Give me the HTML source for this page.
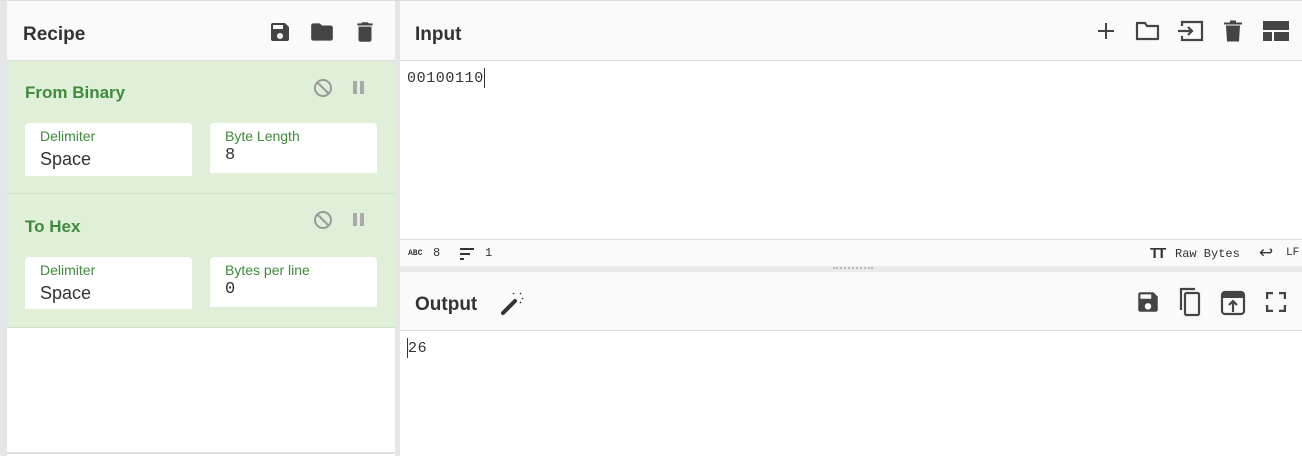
<!DOCTYPE html>
<html><head><meta charset="utf-8"><style>
*{margin:0;padding:0;box-sizing:border-box}
body{width:1302px;height:456px;overflow:hidden;background:#fff;font-family:"Liberation Sans",sans-serif;position:relative}
.a{position:absolute}
.hdr{background:#fafafa;border-bottom:1px solid #ddd}
.title{font-weight:bold;font-size:19px;color:#333}
.op{background:#dfefd8;border-bottom:1px solid #cfe3c6}
.opt{font-weight:bold;font-size:17px;color:#3e8b3c}
.box{background:#fff;border-radius:4px 4px 0 0}
.lab{font-size:14px;color:#3e8b3c}
.val{font-size:18px;color:#333}
.mono{font-family:"Liberation Mono",monospace}
svg{position:absolute}
</style></head><body>
<div class="a" style="left:0;top:0;width:7px;height:456px;background:#e6e6e6"></div>
<div class="a" style="left:395px;top:0;width:5px;height:456px;background:#e6e6e6"></div>
<div class="a" style="left:0;top:0;width:1302px;height:1px;background:#ddd"></div>
<div class="a" style="left:7px;top:452px;width:388px;height:2px;background:#ddd"></div>

<div class="a hdr" style="left:7px;top:1px;width:388px;height:60px"></div>
<div class="a title" style="left:23px;top:24px">Recipe</div>
<svg style="left:268px;top:20px" width="24" height="24" viewBox="0 0 24 24"><path fill="#444" d="M17 3H5a2 2 0 0 0-2 2v14a2 2 0 0 0 2 2h14a2 2 0 0 0 2-2V7zm-5 16a3 3 0 1 1 0-6 3 3 0 0 1 0 6zm3-10H5V5h10z"/></svg>
<svg style="left:309px;top:19px" width="26" height="26" viewBox="0 0 24 24"><path fill="#444" d="M10 4H4a2 2 0 0 0-2 2v12a2 2 0 0 0 2 2h16a2 2 0 0 0 2-2V8a2 2 0 0 0-2-2h-8z"/></svg>
<svg style="left:352px;top:19px" width="26" height="26" viewBox="0 0 24 24"><path fill="#444" d="M6 19a2 2 0 0 0 2 2h8a2 2 0 0 0 2-2V7H6zM19 4h-3.5l-1-1h-5l-1 1H5v2h14z"/></svg>

<div class="a op" style="left:7px;top:61px;width:388px;height:133px"></div>
<div class="a opt" style="left:25px;top:83px">From Binary</div>
<svg style="left:313px;top:78px" width="20" height="20" viewBox="0 0 20 20"><circle cx="10" cy="10" r="8" fill="none" stroke="#9a9a9a" stroke-width="2"/><path d="M4.5 4.5l11 11" stroke="#9a9a9a" stroke-width="2"/></svg>
<div class="a" style="left:353px;top:81px;width:4px;height:13px;background:#aaa"></div>
<div class="a" style="left:360px;top:81px;width:4px;height:13px;background:#aaa"></div>
<div class="a box" style="left:25px;top:123px;width:167px;height:53px"></div>
<div class="a lab" style="left:40px;top:128px">Delimiter</div>
<div class="a val" style="left:40px;top:149px">Space</div>
<div class="a box" style="left:210px;top:123px;width:167px;height:50px"></div>
<div class="a lab" style="left:225px;top:128px">Byte Length</div>
<div class="a val mono" style="left:225px;top:146px;font-size:17px">8</div>

<div class="a op" style="left:7px;top:194px;width:388px;height:134px"></div>
<div class="a opt" style="left:25px;top:217px">To Hex</div>
<svg style="left:313px;top:210px" width="20" height="20" viewBox="0 0 20 20"><circle cx="10" cy="10" r="8" fill="none" stroke="#9a9a9a" stroke-width="2"/><path d="M4.5 4.5l11 11" stroke="#9a9a9a" stroke-width="2"/></svg>
<div class="a" style="left:353px;top:213px;width:4px;height:13px;background:#aaa"></div>
<div class="a" style="left:360px;top:213px;width:4px;height:13px;background:#aaa"></div>
<div class="a box" style="left:25px;top:257px;width:167px;height:52px"></div>
<div class="a lab" style="left:40px;top:262px">Delimiter</div>
<div class="a val" style="left:40px;top:283px">Space</div>
<div class="a box" style="left:210px;top:257px;width:167px;height:50px"></div>
<div class="a lab" style="left:225px;top:262px">Bytes per line</div>
<div class="a val mono" style="left:225px;top:280px;font-size:17px">0</div>

<div class="a hdr" style="left:400px;top:1px;width:902px;height:60px"></div>
<div class="a title" style="left:415px;top:24px">Input</div>
<svg style="left:1095px;top:20px" width="22" height="22" viewBox="0 0 22 22"><path d="M11 3v16M3 11h16" stroke="#444" stroke-width="2"/></svg>
<svg style="left:1134px;top:19px" width="28" height="24" viewBox="0 0 28 24"><path d="M3 4h8l2 3h11v13H3z" fill="none" stroke="#444" stroke-width="2.2" stroke-linejoin="round"/></svg>
<svg style="left:1176px;top:19px" width="30" height="24" viewBox="0 0 30 24"><path d="M6 7V3h20v18H6v-4" fill="none" stroke="#444" stroke-width="2.2"/><path d="M2 12h14M12 8l4 4-4 4" fill="none" stroke="#444" stroke-width="2.2"/></svg>
<svg style="left:1221px;top:19px" width="24" height="25" viewBox="0 0 24 24"><path fill="#444" d="M5 6h14l-1 16H6zM3 3h18v2H3zM9 1h6v2H9z"/></svg>
<svg style="left:1263px;top:21px" width="26" height="20" viewBox="0 0 26 20"><path fill="#444" d="M0 0h26v9H0zM0 11h9v9H0zM11 11h15v9H11z"/></svg>
<div class="a mono" style="left:407px;top:70px;font-size:15px;letter-spacing:0.6px;color:#333">00100110</div>
<div class="a" style="left:484px;top:68px;width:1px;height:20px;background:#333"></div>

<div class="a" style="left:400px;top:239px;width:902px;height:1px;background:#ddd"></div>
<div class="a" style="left:400px;top:240px;width:902px;height:26px;background:#fafafa"></div>
<div class="a mono" style="left:408px;top:249px;font-size:8px;font-weight:bold;color:#333">ABC</div>
<div class="a mono" style="left:433px;top:246px;font-size:12px;color:#333">8</div>
<svg style="left:460px;top:248px" width="16" height="12" viewBox="0 0 16 12"><path d="M0 1h14M0 6h10M0 11h4" stroke="#333" stroke-width="2"/></svg>
<div class="a mono" style="left:485px;top:246px;font-size:12px;color:#333">1</div>
<div class="a" style="left:1150px;top:245px;font-weight:bold;font-size:15px;color:#333;letter-spacing:-2px">TT</div>
<div class="a mono" style="left:1175px;top:247px;font-size:12px;color:#333">Raw Bytes</div>
<div class="a" style="left:1259px;top:243px;font-size:17px;color:#333">↩</div>
<div class="a mono" style="left:1286px;top:247px;font-size:11px;color:#333">LF</div>
<div class="a" style="left:400px;top:266px;width:902px;height:6px;background:#eaeaea"></div>
<div class="a" style="left:833px;top:267px;width:40px;height:2px;border-top:2px dotted #bbb"></div>

<div class="a hdr" style="left:400px;top:272px;width:902px;height:59px"></div>
<div class="a title" style="left:415px;top:294px">Output</div>
<svg style="left:500px;top:290px" width="26" height="26" viewBox="0 0 26 26"><path d="M3 23L15 11" stroke="#333" stroke-width="4" stroke-linecap="round"/><path d="M13 3l1 1M20 3l1 1M20 12l1 1M22 8l1 1" stroke="#333" stroke-width="1.5"/></svg>
<svg style="left:1135px;top:289px" width="26" height="26" viewBox="0 0 24 24"><path fill="#444" d="M17 3H5a2 2 0 0 0-2 2v14a2 2 0 0 0 2 2h14a2 2 0 0 0 2-2V7zm-5 16a3 3 0 1 1 0-6 3 3 0 0 1 0 6zm3-10H5V5h10z"/></svg>
<svg style="left:1177px;top:286px" width="28" height="32" viewBox="0 0 28 32"><path d="M4 24V3h14" fill="none" stroke="#444" stroke-width="2.2"/><rect x="8" y="7" width="14" height="22" rx="1.5" fill="none" stroke="#444" stroke-width="2.2"/></svg>
<svg style="left:1220px;top:290px" width="26" height="26" viewBox="0 0 26 26"><rect x="2" y="2" width="22" height="22" rx="3" fill="none" stroke="#444" stroke-width="2.2"/><path d="M2 3h22v5H2z" fill="#444"/><path d="M13 22v-10M9 15l4-4 4 4" fill="none" stroke="#444" stroke-width="2.2"/></svg>
<svg style="left:1266px;top:292px" width="20" height="20" viewBox="0 0 20 20"><path d="M1 7V1h6M13 1h6v6M19 13v6h-6M7 19H1v-6" fill="none" stroke="#444" stroke-width="2.5"/></svg>
<div class="a" style="left:407px;top:338px;width:1px;height:20px;background:#333"></div>
<div class="a mono" style="left:408px;top:340px;font-size:15px;letter-spacing:0.6px;color:#333">26</div>
</body></html>
